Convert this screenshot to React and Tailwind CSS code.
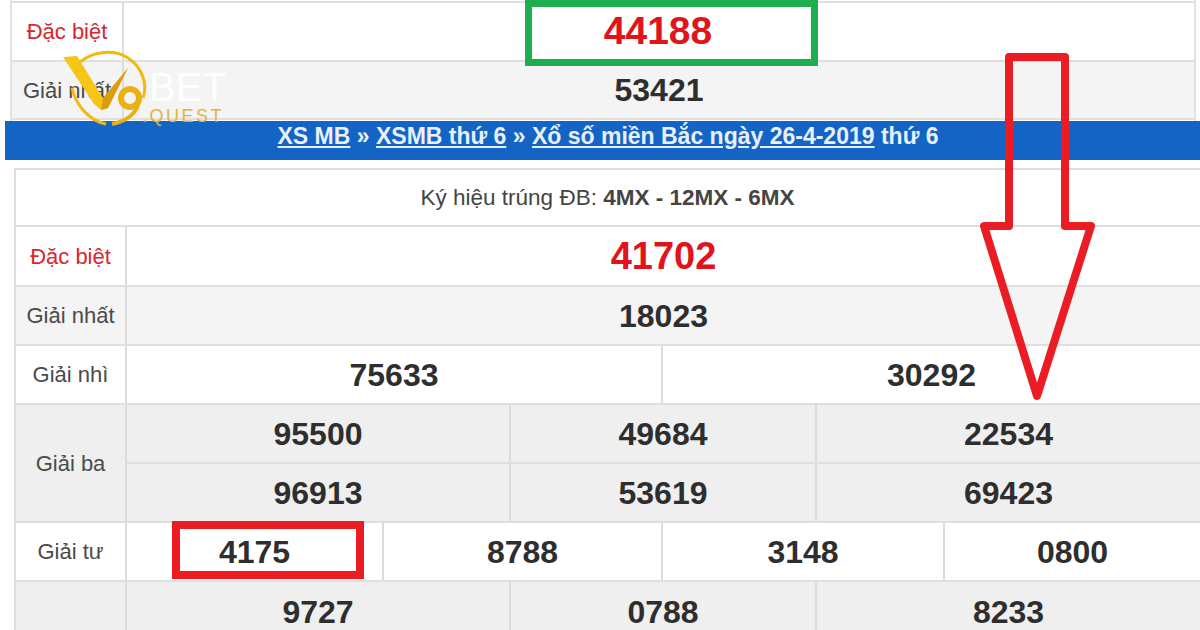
const label = "flex items-center justify-center text-[22px] text-[#4a4a4a] border-r-2 border-[#dcdcdc]";
const num = "flex items-center justify-center font-bold text-[32px] text-[#2e2e2e] border-[#dcdcdc]";

function Row({ children, bg = "bg-white", h = "h-[59px]", red, name, w = "w-[111px]" }) {
  return (
    <div className={`flex ${h} border-b-2 border-[#dfdfdf] ${bg}`}>
      <div className={`${label} ${w} shrink-0 ${red ? "text-[#d9262c]" : ""}`}>{name}</div>
      {children}
    </div>
  );
}

function Cells({ items }) {
  return items.map(([text, cls], i) => (
    <div key={i} className={`${num} ${cls} ${i < items.length - 1 ? "border-r-2" : ""}`}>{text}</div>
  ));
}

function Logo() {
  return (
    <div className="absolute left-[62px] top-[48px] w-[180px] h-[82px]">
      <span className="absolute left-[87px] top-[17px] text-[40px] leading-[44px] text-white/90 font-['Liberation_Sans',sans-serif]">BET</span>
      <svg className="absolute left-0 top-0" width="90" height="82" viewBox="0 0 90 82" fill="none">
        <path d="M18 14 C32 3 52 1 66 10 C80 19 86 36 81 50" stroke="#f2b90f" strokeWidth="3" fill="none" />
        <path d="M10 40 C14 58 28 73 44 76" stroke="#f2b90f" strokeWidth="3" fill="none" />
        <path d="M1 9 L15 8 L41 50 L66 20 L46 60 L39 62 L32 56 Z" fill="#f5c518" />
        <path d="M41 50 L66 20 L46 60 L39 62 Z" fill="#dd9c10" />
        <circle cx="68" cy="50" r="9" stroke="#eab012" strokeWidth="6" fill="none" />
        <path d="M77 52 C76 64 66 73 50 76" stroke="#eab012" strokeWidth="4" fill="none" />
      </svg>
      <span className="absolute left-[80px] top-[58px] text-[18px] leading-[20px] tracking-[2.5px] text-[#e3b23c] font-['Liberation_Sans',sans-serif]">.QUEST</span>
    </div>
  );
}

function Arrow() {
  return (
    <svg className="absolute left-[970px] top-[45px]" width="135" height="365" viewBox="0 0 135 365" fill="none">
      <path d="M39 12 H95 V181 H121 L67 351 L14 181 H39 Z" stroke="#ec1c24" strokeWidth="8" strokeLinejoin="round" />
    </svg>
  );
}

export default function App() {
  return (
    <div className="relative w-[1200px] h-[630px] overflow-hidden bg-white font-['Liberation_Sans',Arial,sans-serif]">
      <div className="ml-[10px] mr-[4px] h-[121px] pt-px border-l-2 border-r-2 border-[#e2e2e2]">
        <div className="border-t-2 border-[#dfdfdf]">
          <Row name="Đặc biệt" red w="w-[112px]">
            <div className="flex-1 flex items-center justify-center font-bold text-[39px] text-[#e1141c] pr-[2px]">44188</div>
          </Row>
          <Row bg="bg-[#f4f4f4]" name="Giải nhất" w="w-[112px]" h="h-[58px]">
            <div className={`${num} flex-1`}>53421</div>
          </Row>
        </div>
      </div>

      <div className="ml-[5px] h-[39px] bg-[#1464c6] flex items-center justify-center text-[23px] font-bold text-[#e8f0fb] pl-[11px] pb-[8px]">
        <span><span className="underline">XS MB</span> » <span className="underline">XSMB thứ 6</span> » <span className="underline">Xổ số miền Bắc ngày 26-4-2019</span> thứ 6</span>
      </div>

      <div className="ml-[14px] mt-[8px] border-l-2 border-t-2 border-[#dfdfdf]">
        <div className="h-[57px] border-b-2 border-[#dfdfdf] flex items-center justify-center text-[22.5px] text-[#444] pr-px">
          <span>Ký hiệu trúng ĐB: <span className="font-bold">4MX - 12MX - 6MX</span></span>
        </div>
        <Row name="Đặc biệt" red h="h-[60px]">
          <div className="flex-1 flex items-center justify-center font-bold text-[38px] text-[#e1141c]">41702</div>
        </Row>
        <Row bg="bg-[#f4f4f4]" name="Giải nhất">
          <div className={`${num} flex-1`}>18023</div>
        </Row>
        <Row name="Giải nhì">
          <Cells items={[["75633", "w-[536px]"], ["30292", "flex-1"]]} />
        </Row>
        <div className="flex h-[118px] border-b-2 border-[#dfdfdf] bg-[#efefef]">
          <div className={`${label} w-[111px] shrink-0`}>Giải ba</div>
          <div className="flex-1">
            <div className="flex h-[59px] border-b-2 border-[#dfdfdf]">
              <Cells items={[["95500", "w-[384px]"], ["49684", "w-[306px]"], ["22534", "flex-1"]]} />
            </div>
            <div className="flex h-[57px]">
              <Cells items={[["96913", "w-[384px]"], ["53619", "w-[306px]"], ["69423", "flex-1"]]} />
            </div>
          </div>
        </div>
        <Row name="Giải tư">
          <Cells items={[["4175", "w-[257px]"], ["8788", "w-[279px]"], ["3148", "w-[282px]"], ["0800", "flex-1"]]} />
        </Row>
        <div className="flex h-[118px] bg-[#efefef]">
          <div className={`${label} w-[111px] shrink-0`}>Giải năm</div>
          <div className="flex-1">
            <div className="flex h-[59px]">
              <Cells items={[["9727", "w-[384px]"], ["0788", "w-[306px]"], ["8233", "flex-1"]]} />
            </div>
          </div>
        </div>
      </div>

      <div className="absolute left-[525px] top-0 w-[293px] h-[66px] border-[7px] border-[#1fae4f]" />
      <div className="absolute left-[172px] top-[521px] w-[192px] h-[58px] border-[8px] border-[#ec1c24]" />
      <Arrow />
      <Logo />
    </div>
  );
}
